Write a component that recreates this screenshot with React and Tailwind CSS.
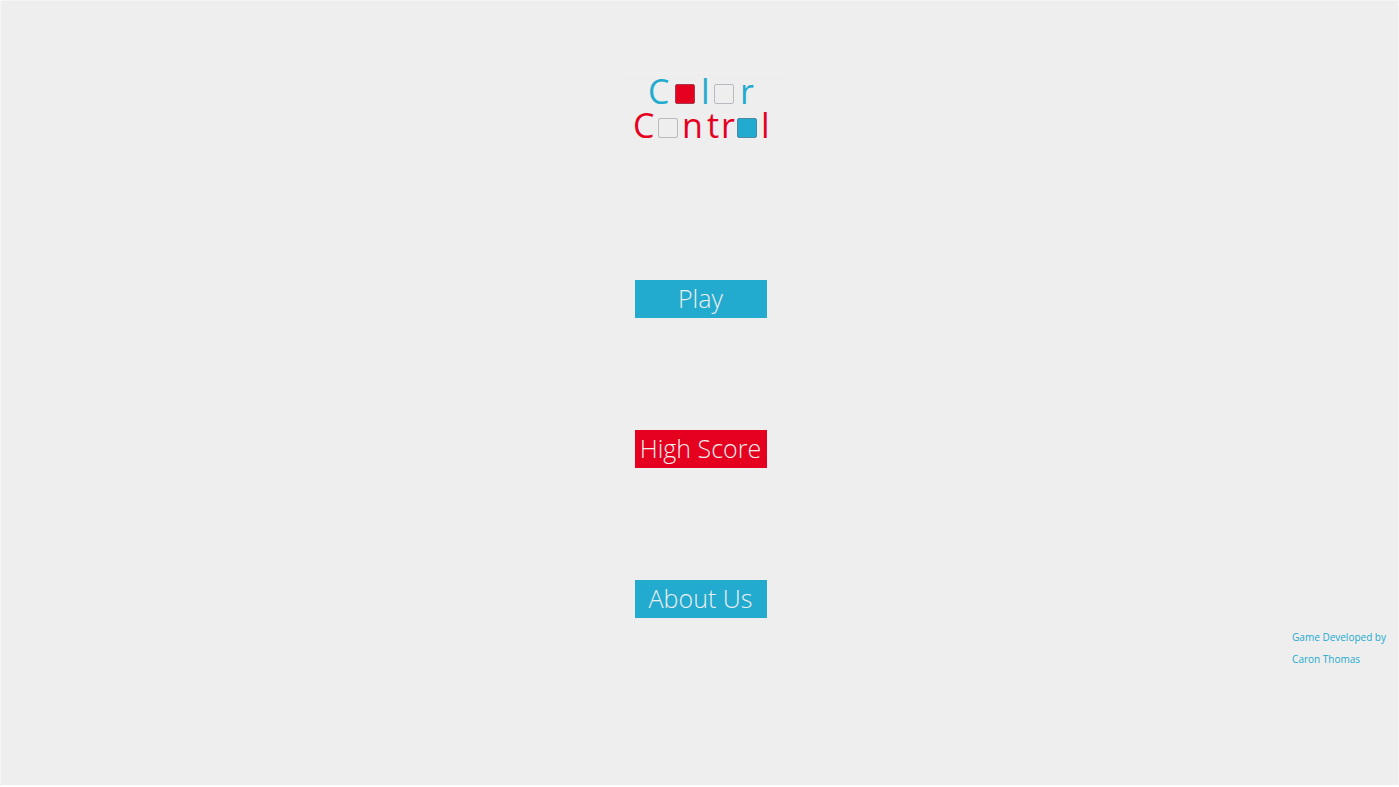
const menuItems = [
  { label: 'Play', color: 'bg-[#22aacf]' },
  { label: 'High Score', color: 'bg-[#e6001f]' },
  { label: 'About Us', color: 'bg-[#22aacf]' },
];

const BLUE = '#22aacf';
const RED = '#e6001f';

function Tile({ x, y, fill = '#eeeeee', stroke = '#b9bac0' }) {
  return <rect x={x} y={y} width="19" height="19" rx="1.5" fill={fill} stroke={stroke} />;
}

// The o's of both words are drawn as game tiles
function Logo() {
  return (
    <svg
      width="170"
      height="82"
      viewBox="0 0 170 82"
      role="img"
      aria-label="Color Control"
      className="overflow-visible font-['Open_Sans'] text-[34px]"
    >
      <rect x="0.5" y="0.5" width="169" height="81" fill="#eeeeee" stroke="#f0f0f0" />

      <g fill={BLUE}>
        <text x="31" y="32">C</text>
        <text x="84" y="32">l</text>
        <text x="123" y="32">r</text>
      </g>
      <Tile x="58.5" y="12.5" fill={RED} stroke="#a83a50" />
      <Tile x="97.5" y="12.5" />

      <g fill={RED}>
        <text x="16" y="66">C</text>
        <text x="65" y="66">n</text>
        <text x="90" y="66">t</text>
        <text x="104" y="66">r</text>
        <text x="144" y="66">l</text>
      </g>
      <Tile x="41.5" y="46.5" />
      <Tile x="120.5" y="46.5" fill={BLUE} stroke="#4a8ba3" />
    </svg>
  );
}

export default function App() {
  return (
    <div className="flex min-h-screen flex-col border border-b-2 border-[#f5f5f5] border-b-white bg-[#eeeeee] pt-[71px] font-['Open_Sans',sans-serif]">
      <header className="flex justify-center pl-1">
        <Logo />
      </header>

      <nav className="mt-[126px] flex flex-col items-center gap-28 pl-0.5">
        {menuItems.map((item) => (
          <button
            key={item.label}
            type="button"
            className={`h-[38px] w-[132px] cursor-pointer whitespace-nowrap pb-0.5 text-[25px] leading-[36px] font-light text-[#eeeeee] ${item.color}`}
          >
            {item.label}
          </button>
        ))}
      </nav>

      <footer className="mt-2 flex justify-end pr-3">
        <p className="text-[10px] leading-[22px] text-[#22aacf]">
          Game Developed by
          <br />
          Caron Thomas
        </p>
      </footer>
    </div>
  );
}
